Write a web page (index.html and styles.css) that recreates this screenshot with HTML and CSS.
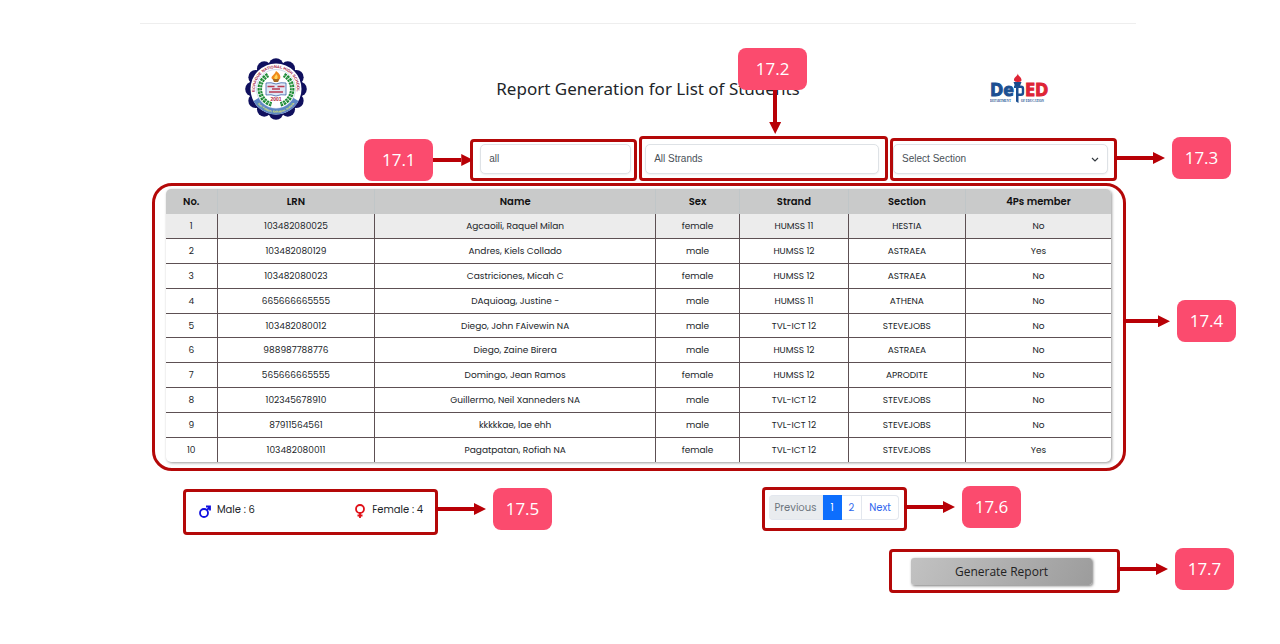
FILE: index.html
```html
<!DOCTYPE html>
<html lang="en">
<head>
<meta charset="utf-8">
<meta name="viewport" content="width=device-width, initial-scale=1">
<title>Report Generation for List of Students</title>
<link rel="stylesheet" href="styles.css">
</head>
<body>
<hr class="top-rule">
<header class="page-header">
  <svg class="seal" viewBox="0 0 62 62" role="img" aria-label="Echague National High School seal">
    <defs>
      <path id="arc-top" d="M12 40A21 21 0 1 1 50 40"/>
      <path id="arc-bottom" d="M9.700 41A23.500 23.500 0 0 0 52.300 41"/>
    </defs>
    <g fill="#10105e">
      <circle cx="31" cy="31" r="27"/>
      <circle cx="31" cy="7.500" r="7.300"/><circle cx="42.750" cy="10.650" r="7.300"/><circle cx="51.350" cy="19.250" r="7.300"/>
      <circle cx="54.500" cy="31" r="7.300"/><circle cx="51.350" cy="42.750" r="7.300"/><circle cx="42.750" cy="51.350" r="7.300"/>
      <circle cx="31" cy="54.500" r="7.300"/><circle cx="19.250" cy="51.350" r="7.300"/><circle cx="10.650" cy="42.750" r="7.300"/>
      <circle cx="7.500" cy="31" r="7.300"/><circle cx="10.650" cy="19.250" r="7.300"/><circle cx="19.250" cy="10.650" r="7.300"/>
    </g>
    <circle cx="31" cy="31" r="25.500" fill="#fff"/>
    <path d="M8.500 43A25.500 25.500 0 0 0 53.500 43L47 39A18 18 0 0 1 15 39Z" fill="#5c86c4"/>
    <circle cx="31" cy="31" r="19.500" fill="#fff" stroke="#8aa6cf" stroke-width=".4"/>
    <path d="M23 17A16 16 0 0 0 27 46.500M39 17A16 16 0 0 1 35 46.500" fill="none" stroke="#1c8a35" stroke-width="4.500" stroke-dasharray="2.400 .8"/>
    <path d="M23 17A16 16 0 0 0 27 46.500M39 17A16 16 0 0 1 35 46.500" fill="none" stroke="#d8efdc" stroke-width=".5"/>
    <path d="M27 20h8l-2 4h-4z" fill="#a76a22"/>
    <path d="M31 13c4 3 5 5 4 8h-8c-2-3 3-4 4-8z" fill="#f08a1c"/>
    <path d="M31 16c2 2 2 3 1 5h-2c-2-2 1-3 1-5z" fill="#ffd75a"/>
    <path d="M21 25q5-1 10 1 5-2 10-1v12q-5-1-10 1-5-2-10-1z" fill="#dfe8f6" stroke="#3c64aa" stroke-width=".8"/>
    <path d="M22.500 28.500h7m3 0h7M27 31h8M24 34h14" stroke="#b93a52" stroke-width="1.300"/>
    <text x="31" y="42.500" class="seal-year">2001</text>
    <text class="seal-name"><textPath href="#arc-top" startOffset="50%">ECHAGUE NATIONAL HIGH SCHOOL</textPath></text>
    <text class="seal-place"><textPath href="#arc-bottom" startOffset="50%">San Fabian, Echague, Isabela</textPath></text>
  </svg>
  <h1 class="title">Report Generation for List of Students</h1>
  <svg class="deped" viewBox="0 0 60 32" role="img" aria-label="DepED Department of Education">
    <text x="0" y="23" class="deped-blue">De</text>
    <text x="35" y="23" class="deped-red">ED</text>
    <path d="M24 12.500h4.500V30L26 28.500V15h-2z" fill="#1b4f91"/>
    <path d="M28 13.800h3q2 0 2 2v4q0 2-2 2h-3" fill="none" stroke="#1b4f91" stroke-width="2.400"/>
    <path d="M23.500 9h8L30 13h-5z" fill="#184a8c"/>
    <path d="M28 0c-.5 3 4 4 3.500 7.500q-.5 1.500-3.500 1.500t-4-1.500c-.5-3.500 4-4.500 4-7.500z" fill="#de2435"/>
    <text x="0" y="29" class="deped-small">DEPARTMENT</text>
    <text x="31" y="29" class="deped-small">OF EDUCATION</text>
  </svg>
</header>

<main class="content">
  <form class="filters">
    <div class="frame filter-search">
      <input class="field" type="text" value="all" aria-label="Search">
      <div class="callout callout-left"><span class="tag tag-wide">17.1</span><span class="arrow"></span></div>
    </div>
    <div class="frame filter-strand">
      <select class="field" aria-label="Strand"><option>All Strands</option></select>
      <div class="callout callout-above"><span class="tag tag-wide">17.2</span><span class="arrow arrow-down"></span></div>
    </div>
    <div class="frame filter-section">
      <select class="field" aria-label="Section"><option>Select Section</option></select>
      <svg class="chevron" viewBox="0 0 8 6" aria-hidden="true"><path d="M1 1l3 3 3-3"/></svg>
      <div class="callout"><span class="arrow"></span><span class="tag">17.3</span></div>
    </div>
  </form>

  <section class="frame table-frame">
    <table class="students">
      <colgroup><col class="c-no"><col class="c-lrn"><col class="c-name"><col class="c-sex"><col class="c-strand"><col class="c-section"><col class="c-member"></colgroup>
      <thead><tr><th>No.</th><th>LRN</th><th>Name</th><th>Sex</th><th>Strand</th><th>Section</th><th>4Ps member</th></tr></thead>
      <tbody>
        <tr class="active"><td>1</td><td>103482080025</td><td>Agcaoili, Raquel Milan</td><td>female</td><td>HUMSS 11</td><td>HESTIA</td><td>No</td></tr>
        <tr><td>2</td><td>103482080129</td><td>Andres, Kiels Collado</td><td>male</td><td>HUMSS 12</td><td>ASTRAEA</td><td>Yes</td></tr>
        <tr><td>3</td><td>103482080023</td><td>Castriciones, Micah C</td><td>female</td><td>HUMSS 12</td><td>ASTRAEA</td><td>No</td></tr>
        <tr><td>4</td><td>665666665555</td><td>DAquioag, Justine -</td><td>male</td><td>HUMSS 11</td><td>ATHENA</td><td>No</td></tr>
        <tr><td>5</td><td>103482080012</td><td>Diego, John FAivewin NA</td><td>male</td><td>TVL-ICT 12</td><td>STEVEJOBS</td><td>No</td></tr>
        <tr><td>6</td><td>988987788776</td><td>Diego, Zaine Birera</td><td>male</td><td>HUMSS 12</td><td>ASTRAEA</td><td>No</td></tr>
        <tr><td>7</td><td>565666665555</td><td>Domingo, Jean Ramos</td><td>female</td><td>HUMSS 12</td><td>APRODITE</td><td>No</td></tr>
        <tr><td>8</td><td>102345678910</td><td>Guillermo, Neil Xanneders NA</td><td>male</td><td>TVL-ICT 12</td><td>STEVEJOBS</td><td>No</td></tr>
        <tr><td>9</td><td>87911564561</td><td>kkkkkae, lae ehh</td><td>male</td><td>TVL-ICT 12</td><td>STEVEJOBS</td><td>No</td></tr>
        <tr><td>10</td><td>103482080011</td><td>Pagatpatan, Rofiah NA</td><td>female</td><td>TVL-ICT 12</td><td>STEVEJOBS</td><td>Yes</td></tr>
      </tbody>
    </table>
    <div class="callout callout-middle"><span class="arrow"></span><span class="tag">17.4</span></div>
  </section>

  <div class="below-table">
    <div class="frame totals">
      <span class="total">
        <svg class="sex-icon male" viewBox="0 0 12 14" aria-hidden="true"><circle cx="5" cy="9" r="4"/><path d="M8 6l3-3M7 2.500h4v4"/></svg>
        Male : 6
      </span>
      <span class="total">
        <svg class="sex-icon female" viewBox="0 0 12 14" aria-hidden="true"><circle cx="6" cy="5" r="4"/><path d="M6 9v5M3.500 11.500h5"/></svg>
        Female : 4
      </span>
      <div class="callout"><span class="arrow"></span><span class="tag">17.5</span></div>
    </div>
    <nav class="frame pager" aria-label="Pages">
      <div class="pages">
        <button class="page" type="button" disabled>Previous</button>
        <a class="page current" href="#" aria-current="page">1</a>
        <a class="page" href="#">2</a>
        <a class="page" href="#">Next</a>
      </div>
      <div class="callout"><span class="arrow"></span><span class="tag">17.6</span></div>
    </nav>
  </div>

  <div class="frame report">
    <button class="generate" type="button">Generate Report</button>
    <div class="callout"><span class="arrow"></span><span class="tag">17.7</span></div>
  </div>
</main>
</body>
</html>
```

FILE: styles.css
```css
* {
  box-sizing: border-box;
}

body {
  margin: 0;
  padding-top: 23px;
  background: #fff;
  color: #212529;
  font-family: Poppins, Inter, "Open Sans", sans-serif;
  font-size: 10px;
}

.top-rule {
  height: 1px;
  margin: 0 144px 0 140px;
  border: 0;
  background: #eee;
}

.page-header {
  display: grid;
  grid-template-columns: repeat(3, 1fr);
  align-items: center;
  justify-items: center;
  margin: 34px 74px 16px 90px;
}

.title {
  margin: 0;
  font: 400 17px/24px "Trebuchet MS", "Noto Sans", sans-serif;
  white-space: nowrap;
}

.seal {
  width: 62px;
  height: 62px;
}

.seal text {
  text-anchor: middle;
  font-family: "Liberation Sans", sans-serif;
  font-weight: 700;
}

.seal .seal-name {
  fill: #a3123a;
  font-size: 4px;
}

.seal .seal-place {
  fill: #e6ee62;
  font-size: 3px;
}

.seal .seal-year {
  fill: #b01e3c;
  font-size: 5px;
}

.deped {
  width: 60px;
  height: 32px;
}

.deped-blue,
.deped-red {
  font: 700 18px "Open Sans", sans-serif;
  fill: #1b4f91;
  stroke: #1b4f91;
  stroke-width: 1px;
}

.deped-red {
  fill: #de2435;
  stroke: #de2435;
}

.deped-small {
  font: 700 3px "Liberation Serif", serif;
  fill: #1b4f91;
}

.content {
  display: flex;
  flex-direction: column;
  margin: 0 154px 0 152px;
}

/* Red outline round each described part */
.frame {
  position: relative;
  border: 3px solid #b40808;
  border-radius: 4px;
}

/* Numbered callouts hanging on the outlines */
.callout {
  position: absolute;
  top: -4px;
  left: 100%;
  z-index: 2;
  display: flex;
  align-items: center;
  gap: 7px;
}

.callout-left {
  top: -3px;
  right: 100%;
  left: auto;
  gap: 0;
}

.callout-above {
  top: auto;
  bottom: calc(100% + 5px);
  left: 96px;
  flex-direction: column;
  gap: 0;
}

.callout-middle {
  top: 48%;
  transform: translateY(-50%);
}

.callout-middle .arrow {
  width: 47px;
}

.tag {
  width: 59px;
  border-radius: 8px;
  background: #fb4b6e;
  color: #fff;
  font: 400 17px/42px "Open Sans", sans-serif;
  text-align: center;
}

.tag-wide {
  width: 69px;
}

.arrow {
  display: flex;
  align-items: center;
  width: 51px;
}

.arrow::before {
  flex: 1;
  height: 4px;
  background: #b80006;
  content: "";
}

.arrow::after {
  width: 12px;
  height: 12px;
  background: #b80006;
  clip-path: polygon(0 0, 100% 50%, 0 100%);
  content: "";
}

.callout-left .arrow {
  width: 40px;
}

.arrow-down {
  flex-direction: column;
  width: 12px;
  height: 44px;
  margin-left: 5px;
}

.arrow-down::before {
  width: 4px;
}

.arrow-down::after {
  clip-path: polygon(0 0, 100% 0, 50% 100%);
}

.filters {
  display: grid;
  grid-template-columns: 167fr 249fr 227fr;
  align-items: end;
  align-self: flex-end;
  column-gap: 2px;
  width: 66.4%;
  margin: 0 9px 2px 0;
}

.filter-search {
  padding: 2px 3px 4px 7px;
}

.filter-strand {
  padding: 5px 6px 4px 3px;
}

.filter-section {
  padding: 3px 6px 4px 0;
}

.field {
  display: block;
  width: 100%;
  height: 30px;
  padding: 0 8px 2px;
  border: 1px solid #dee2e6;
  border-radius: 5px;
  background: #fff;
  box-shadow: 0 1px 2px #0001;
  color: #495057;
  font: 400 10px "Liberation Sans", sans-serif;
  appearance: none;
}

.chevron {
  position: absolute;
  top: 50%;
  right: 15px;
  width: 8px;
  height: 6px;
  margin-top: -3px;
  fill: none;
  stroke: #343a40;
  stroke-width: 1.2;
  pointer-events: none;
}

.table-frame {
  padding: 3px 12px 6px 11px;
  border-radius: 20px;
}

.students {
  width: 100%;
  height: 273px;
  border-collapse: collapse;
  border-radius: 5px;
  box-shadow: 1px 1px 3px #0006;
  table-layout: fixed;
  text-align: center;
  overflow: hidden;
}

.c-no { width: 5.4%; }
.c-lrn { width: 16.7%; }
.c-name { width: 29.7%; }
.c-sex { width: 8.9%; }
.c-strand { width: 11.5%; }
.c-section { width: 12.4%; }
.c-member { width: 15.4%; }

.students th {
  height: 25px;
  padding: 0;
  background: #c9caca;
  color: #111;
  font-size: 10px;
  font-weight: 600;
}

.students th + th {
  border-left: 1px solid #c0c6c8;
}

.students td {
  padding: 0;
  font-size: 9px;
  line-height: 22px;
}

.students td + td {
  border-left: 1px solid #5d5053;
}

.students tr + tr td {
  border-top: 1px solid #5d5053;
}

.active {
  background: #ececec;
}

.below-table {
  display: flex;
  align-items: flex-start;
  justify-content: space-between;
  margin: 16px 219px 0 31px;
}

.totals {
  display: flex;
  align-items: center;
  justify-content: space-between;
  width: 255px;
  height: 46px;
  margin-top: 2px;
  padding: 0 12px 4px 13px;
}

.total {
  display: flex;
  align-items: center;
  gap: 6px;
}

.sex-icon {
  width: 12px;
  height: 14px;
  margin-top: 2px;
  fill: none;
  stroke-width: 1.8;
}

.male {
  stroke: #1010e0;
}

.female {
  stroke: #e01018;
}

.pager {
  padding: 5px 5px 8px 4px;
}

.pages {
  display: flex;
}

.page {
  padding: 0 7px;
  border: 1px solid #e3e7ee;
  border-left: 0;
  background: #fff;
  color: #2f67ee;
  font: inherit;
  line-height: 23px;
  text-decoration: none;
}

.page:first-child {
  padding: 0 6px;
  border-radius: 4px 0 0 4px;
}

.page:last-child {
  border-radius: 0 4px 4px 0;
}

.page:disabled {
  background: #e9ecef;
  color: #6c757d;
}

.page.current {
  border-color: #0d6efd;
  background: #0d6efd;
  color: #fff;
}

.report {
  align-self: flex-end;
  width: 231px;
  margin: 14px 6px 0 0;
  padding: 6px 25px 5px 19px;
}

.generate {
  display: block;
  width: 100%;
  padding: 0;
  border: 0;
  border-radius: 3px;
  background: linear-gradient(120deg, #c2c2c2, #9c9c9c);
  box-shadow: 1px 1px 3px #0008;
  color: #222;
  font: 400 12px/27px "Segoe UI", "Open Sans", sans-serif;
}
```
